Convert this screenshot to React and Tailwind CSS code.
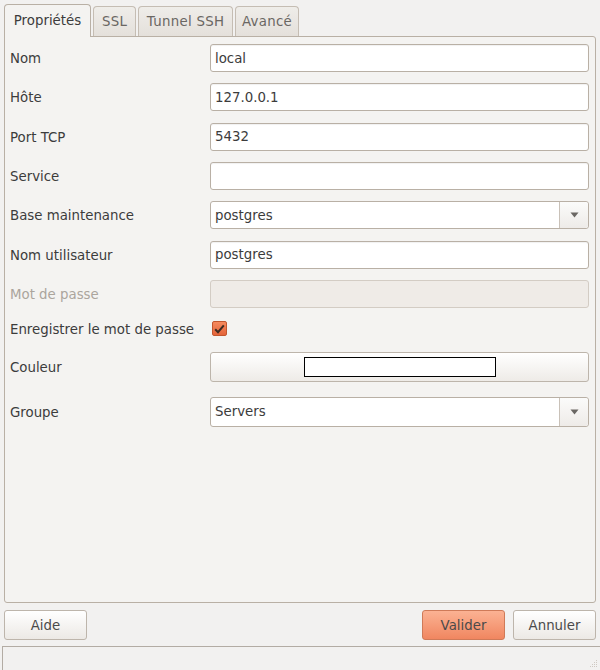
import React, { useState } from 'react';

const Field = ({ label, children, disabled, rowClass = 'h-[28px]' }) => (
  <div className={`grid grid-cols-[200px_1fr] items-center ${rowClass}`}>
    <span className={`pt-[2px] ${disabled ? 'text-[#aba59d]' : 'text-[#3c3c3c]'}`}>{label}</span>
    <div className="h-full">{children}</div>
  </div>
);

const TextInput = ({ value, disabled }) => (
  <div
    className={`h-full rounded-[3px] border flex items-center pl-[4px] pt-[1px] ${
      disabled
        ? 'bg-[#efebe7] border-[#d3ccc4]'
        : 'bg-white border-[#b9b0a5] shadow-[inset_0_1px_1px_rgba(0,0,0,0.06)]'
    }`}
  >
    <span className="text-[#3c3c3c]">{value}</span>
  </div>
);

const Combo = ({ value }) => (
  <div className="h-full rounded-[3px] border border-[#b9b0a5] bg-white flex">
    <div className="flex-1 flex items-center pl-[4px] pt-[1px] text-[#3c3c3c]">{value}</div>
    <div className="w-[29px] border-l border-[#c9c1b8] rounded-r-[3px] bg-gradient-to-b from-[#fbfbfa] to-[#eeebe8] flex items-center justify-center">
      <svg width="9" height="6" viewBox="0 0 9 6">
        <path d="M0.5 0.5 L8.5 0.5 L4.5 5.5 Z" fill="#6a6763" />
      </svg>
    </div>
  </div>
);

const Button = ({ children, primary, className = '' }) => (
  <button
    type="button"
    className={`h-[30px] w-[83px] rounded-[3px] border pt-[1px] text-[#4a4a4a] ${
      primary
        ? 'border-[#cf7a58] bg-gradient-to-b from-[#fbb293] to-[#f08660]'
        : 'border-[#bdb5ab] bg-gradient-to-b from-[#ffffff] to-[#ece9e5]'
    } ${className}`}
  >
    {children}
  </button>
);

const tabs = [
  { name: 'Propriétés', w: 'w-[87px]' },
  { name: 'SSL', w: 'w-[43px]' },
  { name: 'Tunnel SSH', w: 'w-[95px]' },
  { name: 'Avancé', w: 'w-[64px]' },
];

export default function App() {
  const [active, setActive] = useState(0);
  const [savePass, setSavePass] = useState(true);

  return (
    <div className="w-[600px] h-[670px] bg-[#f2f1f0] flex flex-col text-[13.33px] font-['DejaVu_Sans',sans-serif] overflow-hidden">
      <div className="px-[4px] pt-[4px]">
        {/* Tabs */}
        <div className="flex items-end gap-[2px] h-[32px]">
          {tabs.map((t, i) =>
            i === active ? (
              <div
                key={t.name}
                onClick={() => setActive(i)}
                className={`${t.w} h-[33px] -mb-px relative z-10 bg-[#f4f3f1] border border-b-0 border-[#b9b0a5] rounded-t-[4px] flex items-center justify-center text-[#3c3c3c] cursor-default`}
              >
                {t.name}
              </div>
            ) : (
              <div
                key={t.name}
                onClick={() => setActive(i)}
                className={`${t.w} h-[30px] pt-[1px] bg-gradient-to-b from-[#efede9] to-[#e4e0db] border border-b-0 border-[#c5bdb3] rounded-t-[4px] flex items-center justify-center text-[#6a6763] tracking-[0.3px] cursor-default`}
              >
                {t.name}
              </div>
            )
          )}
        </div>

        {/* Panel */}
        <div className="h-[567px] bg-[#f4f3f1] border border-[#b9b0a5] rounded-b-[3px] rounded-tr-[3px] pl-[5px] pr-[6px] pt-[7px] flex flex-col">
          <div className="flex flex-col gap-[11.33px]">
            <Field label="Nom"><TextInput value="local" /></Field>
            <Field label="Hôte"><TextInput value="127.0.0.1" /></Field>
            <Field label="Port TCP"><TextInput value="5432" /></Field>
            <Field label="Service"><TextInput value="" /></Field>
            <Field label="Base maintenance"><Combo value="postgres" /></Field>
            <Field label="Nom utilisateur"><TextInput value="postgres" /></Field>
            <Field label="Mot de passe" disabled><TextInput value="" disabled /></Field>
          </div>

          <div className="mt-[7px]">
            <Field label="Enregistrer le mot de passe">
              <div className="h-full flex items-center pl-[2px]">
                <button
                  type="button"
                  onClick={() => setSavePass(!savePass)}
                  className={`w-[15px] h-[15px] rounded-[2px] border flex items-center justify-center ${
                    savePass
                      ? 'border-[#c2562e] bg-gradient-to-b from-[#f58a5e] to-[#e4643a]'
                      : 'border-[#b9b0a5] bg-white'
                  }`}
                >
                  {savePass && (
                    <svg width="11" height="10" viewBox="0 0 11 10">
                      <path d="M1.2 5.2 L4 8.2 L9.8 1.3" fill="none" stroke="#3d2b22" strokeWidth="2" />
                    </svg>
                  )}
                </button>
              </div>
            </Field>
          </div>

          <div className="mt-[9px]">
            <Field label="Couleur" rowClass="h-[30px]">
              <div className="h-full rounded-[3px] border border-[#bdb5ab] bg-gradient-to-b from-[#ffffff] to-[#eeebe7] flex items-center justify-center">
                <div className="w-[192px] h-[20px] bg-white border border-black" />
              </div>
            </Field>
          </div>

          <div className="mt-[15px]">
            <Field label="Groupe" rowClass="h-[30px]">
              <Combo value="Servers" />
            </Field>
          </div>
        </div>
      </div>

      {/* Buttons */}
      <div className="flex items-center px-[4px] mt-[7px] h-[30px]">
        <Button>Aide</Button>
        <div className="flex-1" />
        <Button primary>Valider</Button>
        <Button className="ml-[8px]">Annuler</Button>
      </div>

      {/* Status bar */}
      <div className="mt-[6px] ml-[2px] flex-1 border-t border-l border-[#b3aca4] bg-[#f2f1f0] relative">
        <svg className="absolute right-[2px] bottom-[2px]" width="10" height="10" viewBox="0 0 10 10">
          <g fill="#cfc9c2">
            <rect x="8" y="2" width="1" height="1" />
            <rect x="6" y="4" width="1" height="1" />
            <rect x="8" y="4" width="1" height="1" />
            <rect x="4" y="6" width="1" height="1" />
            <rect x="6" y="6" width="1" height="1" />
            <rect x="8" y="6" width="1" height="1" />
            <rect x="2" y="8" width="1" height="1" />
            <rect x="4" y="8" width="1" height="1" />
            <rect x="6" y="8" width="1" height="1" />
            <rect x="8" y="8" width="1" height="1" />
          </g>
        </svg>
      </div>
    </div>
  );
}
